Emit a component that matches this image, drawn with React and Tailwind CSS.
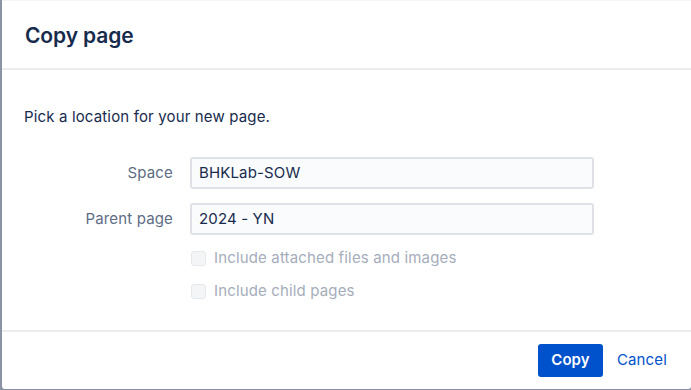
import React from 'react';

const Field = ({ label, value }) => (
    <div className="flex items-center">
        <label className="w-[166px] shrink-0 pr-[17px] text-right text-[15px] tracking-[0.15px] text-[#5e6c84]">{label}</label>
        <div className="w-[404px] h-[32px] flex items-center px-[7px] bg-[#fafbfc] border-2 border-[#dfe1e6] rounded-[3px] text-[15px] tracking-[0.15px] text-[#172b4d]">
            {value}
        </div>
    </div>
);

const Check = ({ label }) => (
    <div className="flex items-center h-[22px] pl-[167px]">
        <span className="w-[15px] h-[15px] rounded-[3px] border border-[#e6e8ec] bg-[#f4f5f7]" />
        <span className="ml-[8px] text-[15px] tracking-[0.15px] text-[#a5adba]">{label}</span>
    </div>
);

export default function App() {
    return (
        <div className="w-[691px] h-[390px] bg-[#8993a4] pl-[2px] overflow-hidden" style={{ fontFamily: 'Inter, "Noto Sans", sans-serif' }}>
            <div className="h-[389px] bg-white rounded-b-[3px] border-t border-[#f4f5f7] flex flex-col">
                {/* Header */}
                <div className="h-[69px] flex items-center pt-[2px] px-[23px] border-b-2 border-[#ebecf0]">
                    <h2 className="text-[21px] font-semibold text-[#172b4d] tracking-[-0.1px]">Copy page</h2>
                </div>

                {/* Body */}
                <div className="flex-1 px-[22px]">
                    <p className="mt-[37px] leading-[20px] text-[15px] tracking-[0.15px] text-[#172b4d]">Pick a location for your new page.</p>
                    <div className="mt-[30px] flex flex-col gap-[14px]">
                        <Field label="Space" value="BHKLab-SOW" />
                        <Field label="Parent page" value="2024 - YN" />
                    </div>
                    <div className="mt-[12px] flex flex-col gap-[11px]">
                        <Check label="Include attached files and images" />
                        <Check label="Include child pages" />
                    </div>
                </div>

                {/* Footer */}
                <div className="h-[59px] border-t-2 border-[#ebecf0] flex items-center justify-end pr-[16px]">
                    <button className="h-[33px] w-[65px] rounded-[3px] bg-[#0052cc] text-white text-[15px] font-semibold">Copy</button>
                    <button className="ml-[6px] h-[33px] px-[8px] text-[15px] tracking-[0.15px] text-[#0052cc]">Cancel</button>
                </div>
            </div>
        </div>
    );
}
